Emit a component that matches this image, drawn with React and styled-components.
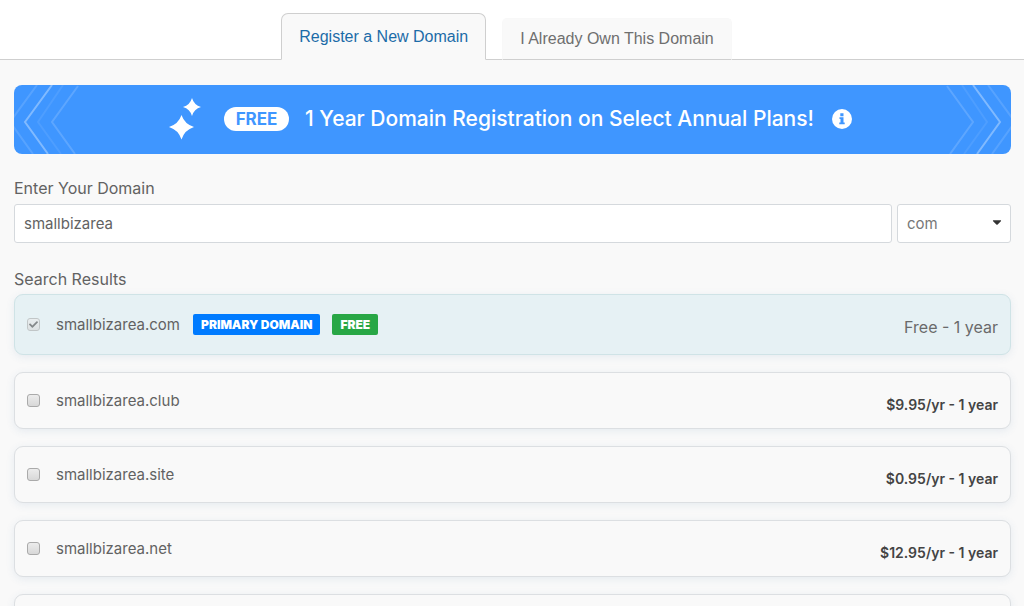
import React, { useState } from "react";
import styled, { createGlobalStyle } from "styled-components";
import { FaCaretDown, FaCheck } from "react-icons/fa";

const results = [
  { name: "smallbizarea.com", price: "Free - 1 year", primary: true },
  { name: "smallbizarea.club", price: "$9.95/yr - 1 year" },
  { name: "smallbizarea.site", price: "$0.95/yr - 1 year" },
  { name: "smallbizarea.net", price: "$12.95/yr - 1 year" },
];

const Chevrons = ({ flip }) => (
  <ChevronArt $flip={flip} viewBox="0 0 66 69" aria-hidden="true">
    <g fill="none" stroke="#fff" strokeWidth="2">
      <path d="M23 0L-4 37L19 69" opacity="0.13" />
      <path d="M38 0L11 37L34 69" opacity="0.34" />
      <path d="M49 0L24 37L47 69" opacity="0.08" />
      <path d="M64 1L38 37L61 69" opacity="0.16" />
    </g>
  </ChevronArt>
);

const Sparkles = () => (
  <svg width="32" height="42" viewBox="0 0 32 42" aria-hidden="true">
    <g fill="#fff">
      <path d="M23 0Q25 7 32 9Q25 11 23 18Q21 11 14 9Q21 7 23 0Z" />
      <path d="M12.500 17Q15.500 26 25 29Q15.500 32 12.500 41.500Q9.500 32 0 29Q9.500 26 12.500 17Z" />
    </g>
  </svg>
);

const InfoIcon = () => (
  <svg width="20" height="20" viewBox="0 0 20 20" aria-hidden="true">
    <circle cx="10" cy="10" r="10" fill="#fff" />
    <path
      fill="#3f96ff"
      d="M8.300 4.300h3.200v2.900H8.300zM7.500 8.300h4v5.200h1.200v1.800H7.300v-1.800h1.200v-3.400h-1z"
    />
  </svg>
);

const DomainRow = ({ name, price, primary }) => {
  const [checked, setChecked] = useState(Boolean(primary));

  return (
    <Row $primary={primary}>
      <RowLabel>
        <CheckWrap $disabled={primary}>
          <Checkbox
            type="checkbox"
            checked={checked}
            disabled={primary}
            onChange={(e) => setChecked(e.target.checked)}
          />
          {checked && <FaCheck />}
        </CheckWrap>
        <span>{name}</span>
      </RowLabel>
      {primary && (
        <Badges>
          <Badge $color="#007bff">PRIMARY DOMAIN</Badge>
          <Badge $color="#28a745">FREE</Badge>
        </Badges>
      )}
      <Price $primary={primary}>{price}</Price>
    </Row>
  );
};

const App = () => {
  const [domain, setDomain] = useState("smallbizarea");
  const [tld, setTld] = useState("com");

  return (
    <>
      <GlobalStyle />
      <Tabs role="tablist">
        <Tab type="button" role="tab" aria-selected="true" $active>
          Register a New Domain
        </Tab>
        <Tab type="button" role="tab" aria-selected="false">
          I Already Own This Domain
        </Tab>
      </Tabs>

      <Main>
        <Banner>
          <Chevrons />
          <BannerContent>
            <Sparkles />
            <FreePill>FREE</FreePill>
            <BannerText>
              1 Year Domain Registration on Select Annual Plans!
            </BannerText>
            <InfoButton type="button" aria-label="More information">
              <InfoIcon />
            </InfoButton>
          </BannerContent>
          <Chevrons flip />
        </Banner>

        <FieldLabel htmlFor="domain">Enter Your Domain</FieldLabel>
        <Fields>
          <DomainInput
            id="domain"
            type="text"
            value={domain}
            onChange={(e) => setDomain(e.target.value)}
          />
          <SelectWrap>
            <TldSelect
              aria-label="Domain extension"
              value={tld}
              onChange={(e) => setTld(e.target.value)}
            >
              <option>com</option>
              <option>club</option>
              <option>site</option>
              <option>net</option>
              <option>org</option>
            </TldSelect>
            <FaCaretDown />
          </SelectWrap>
        </Fields>

        <ResultsTitle>Search Results</ResultsTitle>
        <Results>
          {results.map((item) => (
            <DomainRow key={item.name} {...item} />
          ))}
          <Row aria-hidden="true" />
        </Results>
      </Main>
    </>
  );
};

const GlobalStyle = createGlobalStyle`
  * {
    box-sizing: border-box;
  }

  html {
    scrollbar-width: none;
  }

  body {
    margin: 0;
    background: #f9f9f9;
    color: #626262;
    font-family: Inter, sans-serif;
    font-size: 16px;
  }
`;

const Tabs = styled.div`
  display: flex;
  justify-content: center;
  align-items: flex-end;
  gap: 16px;
  padding: 13px 11px 0 0;
  background: #fff;
  box-shadow: inset 0 -1px #cfcfcf;
`;

const Tab = styled.button`
  height: ${({ $active }) => ($active ? "47px" : "42px")};
  padding: 0 17px;
  border: 1px solid ${({ $active }) => ($active ? "#cfcfcf" : "#f8f8f8")};
  border-bottom-color: ${({ $active }) => ($active ? "#f9f9f9" : "#cfcfcf")};
  border-radius: ${({ $active }) => ($active ? "7px 7px 0 0" : "5px 5px 0 0")};
  background: #f9f9f9;
  color: ${({ $active }) => ($active ? "#1c6ca8" : "#6f6f6f")};
  font-family: "Liberation Sans", sans-serif;
  font-size: 16px;
  cursor: pointer;
`;

const Main = styled.main`
  padding: 25px 13px 20px 14px;
`;

const Banner = styled.section`
  display: flex;
  justify-content: space-between;
  height: 69px;
  overflow: hidden;
  border-radius: 8px;
  background: #3f96ff;
`;

const ChevronArt = styled.svg`
  width: 66px;
  height: 69px;
  transform: ${({ $flip }) => ($flip ? "scaleX(-1)" : "none")};
`;

const BannerContent = styled.div`
  display: flex;
  align-items: center;
  padding: 0 4px 2px 0;
  color: #fff;
`;

const FreePill = styled.span`
  width: 65px;
  margin: 0 16px 0 23px;
  border-radius: 12px;
  background: #fff;
  color: #3f96ff;
  font-size: 17px;
  font-weight: 700;
  line-height: 24px;
  text-align: center;
`;

const BannerText = styled.strong`
  font-size: 21px;
  font-weight: 500;
  white-space: nowrap;
`;

const InfoButton = styled.button`
  display: flex;
  margin-left: 18px;
  padding: 0;
  border: 0;
  background: none;
  cursor: pointer;
`;

const FieldLabel = styled.label`
  display: block;
  margin-top: 22px;
  line-height: 24px;
`;

const Fields = styled.div`
  display: flex;
  gap: 5px;
  margin-top: 4px;
`;

const DomainInput = styled.input`
  flex: 1;
  min-width: 0;
  height: 39px;
  padding: 0 9px;
  border: 1px solid #d5d9dd;
  border-radius: 3px;
  background: #fff;
  color: #626262;
  font-family: inherit;
  font-size: 15px;
`;

const SelectWrap = styled.div`
  position: relative;
  width: 114px;

  svg {
    position: absolute;
    top: 11px;
    right: 7px;
    color: #333;
    font-size: 14px;
    pointer-events: none;
  }
`;

const TldSelect = styled.select`
  width: 100%;
  height: 39px;
  padding: 0 9px;
  border: 1px solid #d5d9dd;
  border-radius: 3px;
  background: #fff;
  color: #777;
  font-family: inherit;
  font-size: 15px;
  appearance: none;
`;

const ResultsTitle = styled.h2`
  margin: 24px 0 3px;
  font-size: 16px;
  font-weight: 400;
  line-height: 24px;
`;

const Results = styled.ul`
  display: flex;
  flex-direction: column;
  gap: 17px;
  margin: 0;
  padding: 0;
  list-style: none;
`;

const Row = styled.li`
  display: flex;
  align-items: center;
  min-height: ${({ $primary }) => ($primary ? "61px" : "57px")};
  padding: 0 12px;
  border: 1px solid ${({ $primary }) => ($primary ? "#cfe3e6" : "#dcdfe2")};
  border-radius: 9px;
  background: ${({ $primary }) => ($primary ? "#e6f1f4" : "#f9f9f9")};
  box-shadow: 0 2px 8px rgba(60, 110, 160, 0.1);
`;

const RowLabel = styled.label`
  display: flex;
  align-items: center;
  gap: 16px;
  font-size: 15px;
`;

const CheckWrap = styled.span`
  position: relative;
  display: flex;
  width: 13px;
  opacity: ${({ $disabled }) => ($disabled ? 0.6 : 1)};

  svg {
    position: absolute;
    top: 2px;
    left: 2px;
    color: #444;
    font-size: 9px;
    pointer-events: none;
  }
`;

const Checkbox = styled.input`
  width: 13px;
  height: 13px;
  margin: 0;
  border: 1px solid #aaa;
  border-radius: 3px;
  background: linear-gradient(#ececec, #d8d8d8);
  appearance: none;
`;

const Badges = styled.div`
  display: flex;
  gap: 12px;
  margin-left: 13px;
`;

const Badge = styled.span`
  padding: 1px 8px 0;
  border-radius: 2px;
  background: ${({ $color }) => $color};
  color: #fff;
  font-size: 12px;
  font-weight: 900;
  line-height: 20px;
`;

const Price = styled.span`
  margin-left: auto;
  padding-top: ${({ $primary }) => ($primary ? "4px" : "7px")};
  color: ${({ $primary }) => ($primary ? "#6a6a6a" : "#444")};
  font-size: ${({ $primary }) => ($primary ? "16px" : "14px")};
  font-weight: ${({ $primary }) => ($primary ? 400 : 600)};
`;

export default App;
